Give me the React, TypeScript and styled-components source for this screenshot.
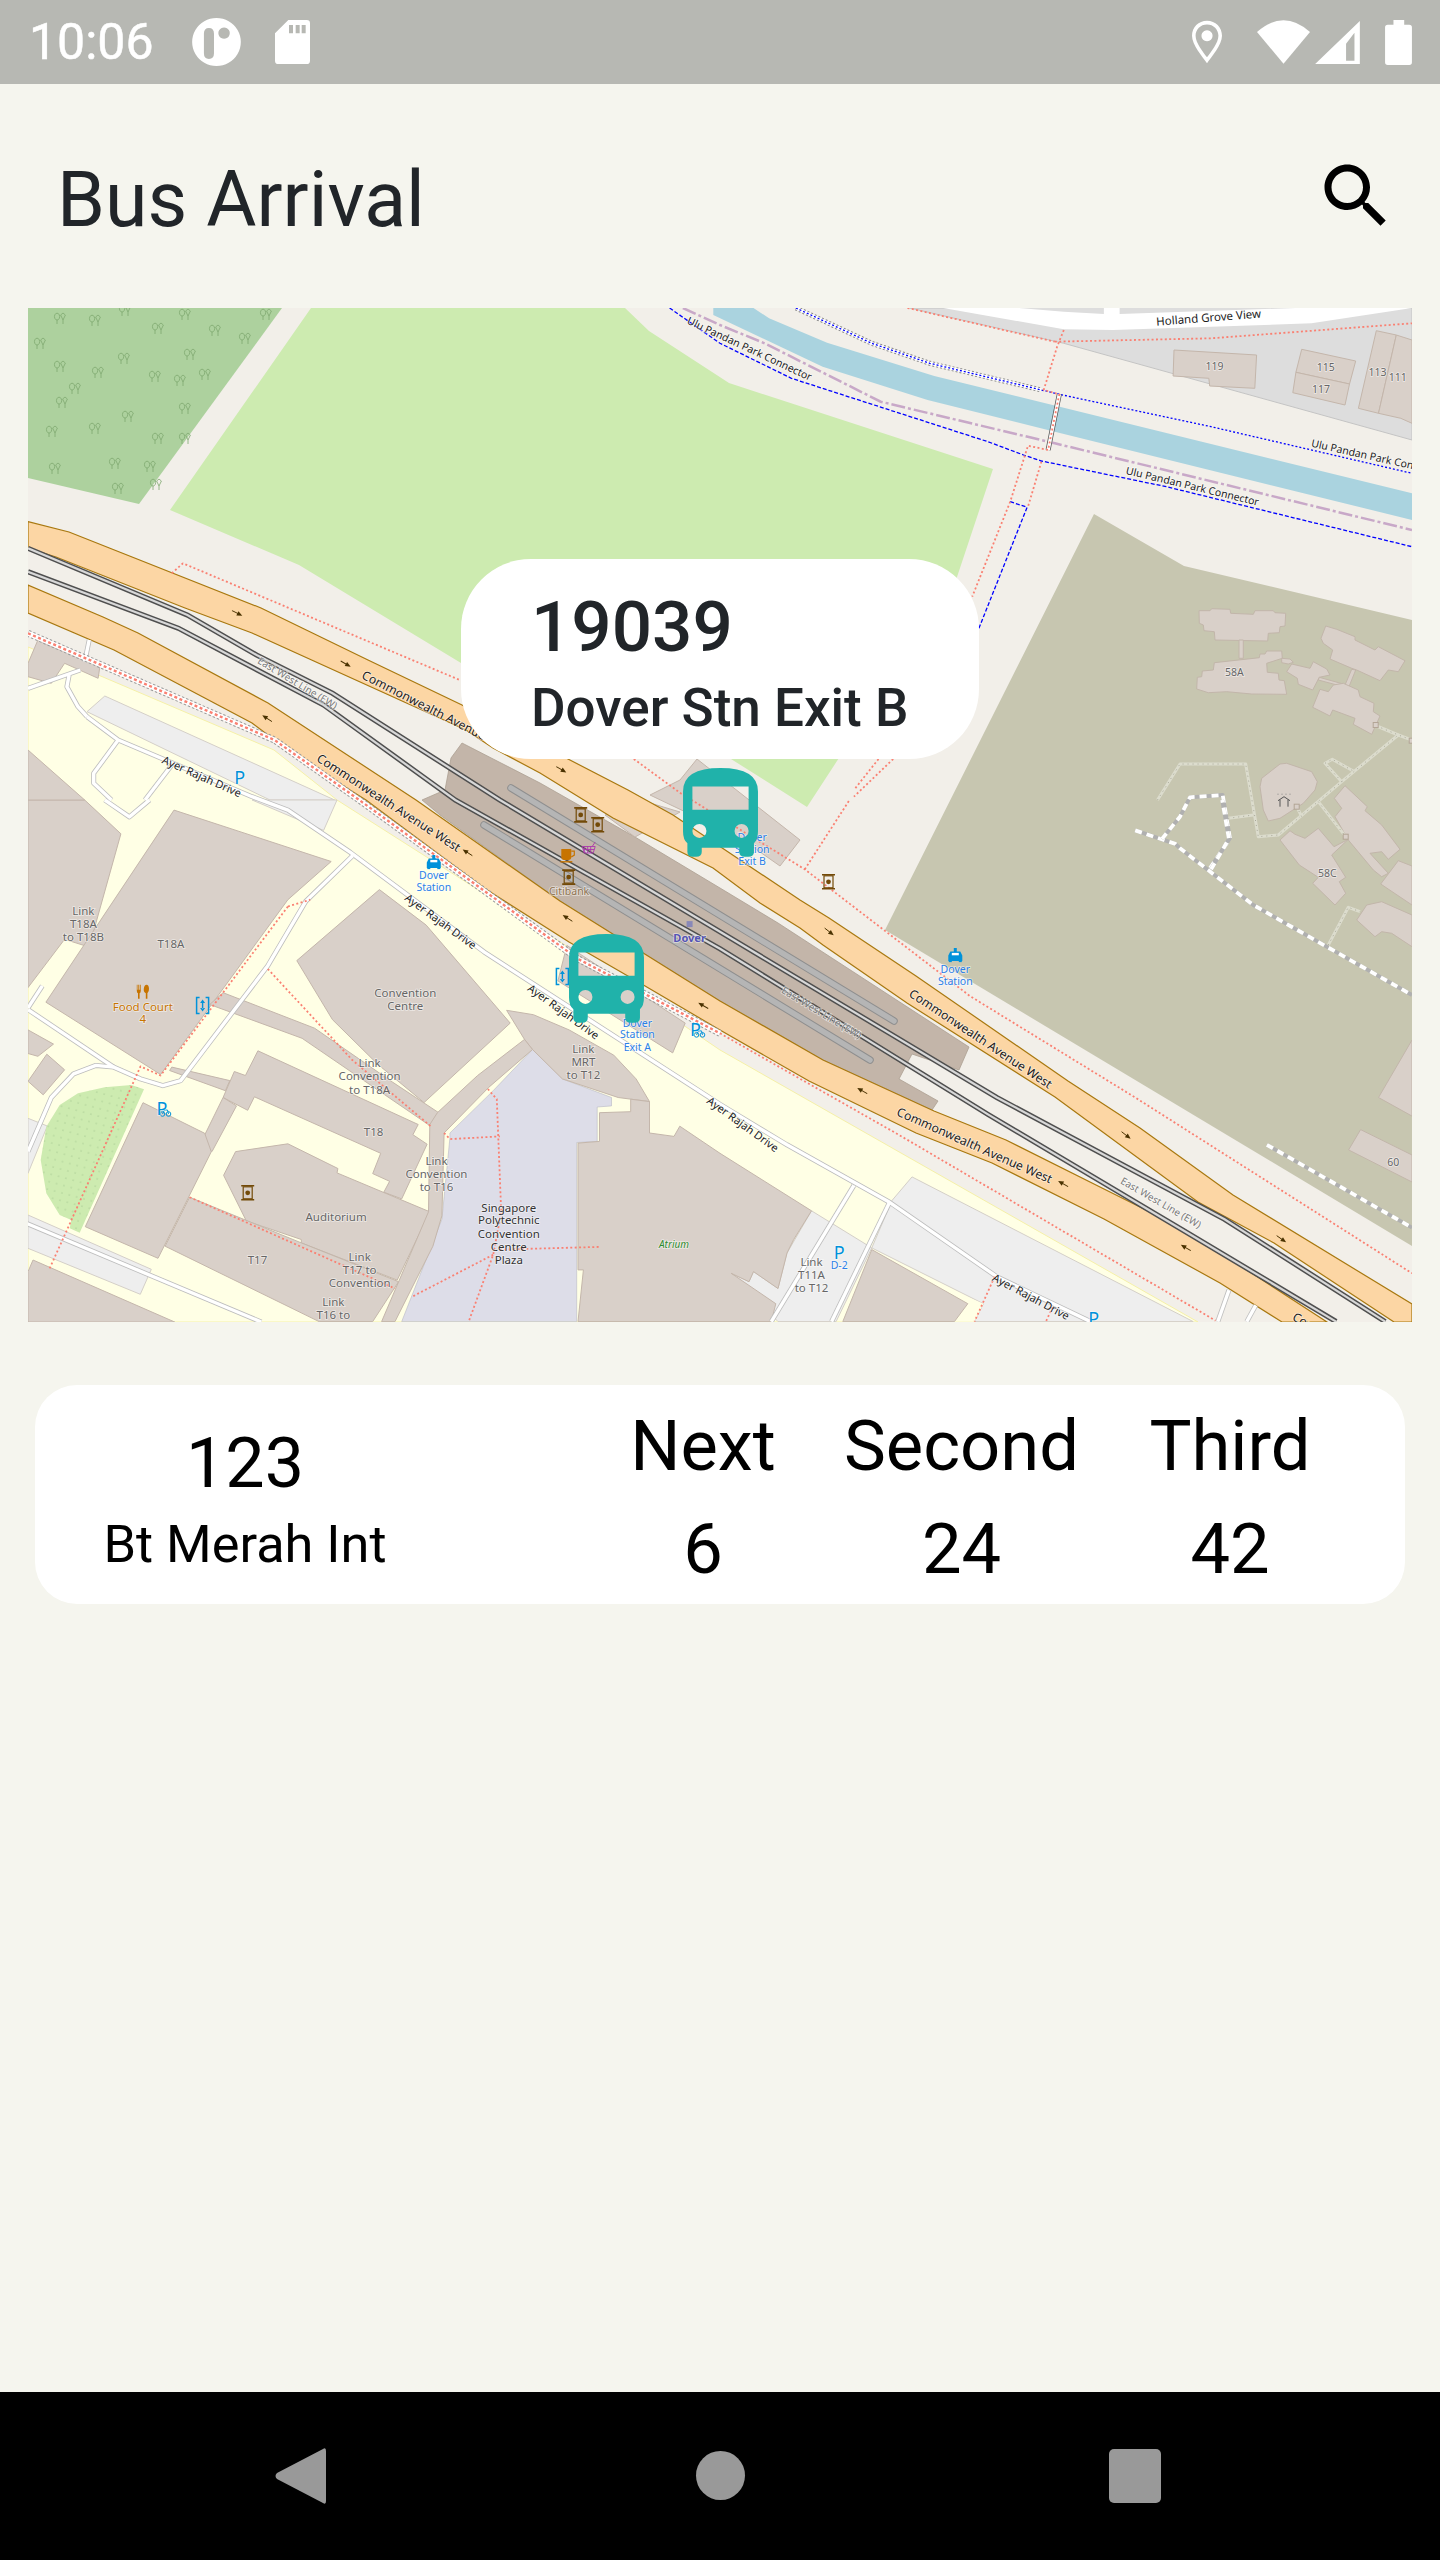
import React from 'react';
import styled, { createGlobalStyle } from 'styled-components';

const GlobalStyle = createGlobalStyle`
  html, body { margin: 0; padding: 0; background: #f5f5ee; }
  * { box-sizing: border-box; }
`;

const Page = styled.div`
  width: 1440px;
  height: 2560px;
  display: flex;
  flex-direction: column;
  background: #f5f5ee;
  font-family: Roboto, "Liberation Sans", sans-serif;
  overflow: hidden;
`;
const StatusBar = styled.div`
  height: 84px;
  flex: none;
  background: #b7b8b3;
  display: flex;
  align-items: center;
  padding: 0 28px 0 29px;
`;
const Clock = styled.div`
  color: #fff;
  font-size: 50px;
  line-height: 84px;
  width: 163px;
  -webkit-text-stroke: 0.5px #fff;
`;
const StatusGroup = styled.div<{ $gap: number }>`
  display: flex;
  align-items: center;
  gap: ${(p) => p.$gap}px;
`;
const StatusIcon = styled.svg<{ $after?: number; $before?: number }>`
  display: block;
  flex: none;
  margin-right: ${(p) => p.$after || 0}px;
  margin-left: ${(p) => p.$before || 0}px;
`;
const Grow = styled.div`
  flex: 1;
`;
const AppBar = styled.div`
  height: 224px;
  flex: none;
  display: flex;
  align-items: center;
  justify-content: space-between;
  padding: 0 42px 0 57px;
`;
const Title = styled.h1`
  margin: 0;
  padding-top: 8px;
  font-size: 77px;
  font-weight: 400;
  line-height: 90px;
  color: #212529;
`;
const SearchIcon = styled.svg`
  display: block;
  width: 84px;
  height: 84px;
`;
const MapPanel = styled.div`
  position: relative;
  flex: none;
  width: 1384px;
  height: 1014px;
  margin: 0 28px;
  overflow: hidden;
`;
const MapSvg = styled.svg`
  display: block;
  width: 1384px;
  height: 1014px;
`;
const Bubble = styled.div`
  position: absolute;
  left: 433px;
  top: 251px;
  width: 518px;
  height: 200px;
  border-radius: 70px;
  background: #fff;
  padding: 30px 0 0 70px;
  color: #212529;
  font-weight: 500;
`;
const StopCode = styled.div`
  font-size: 71px;
  line-height: 76px;
`;
const StopName = styled.div`
  margin-top: 13px;
  font-size: 53px;
  line-height: 60px;
  white-space: nowrap;
`;
const BusMarker = styled.svg<{ $left: number; $top: number }>`
  position: absolute;
  left: ${(p) => p.$left}px;
  top: ${(p) => p.$top}px;
  width: 75px;
  height: 89px;
`;
const MapLabel = styled.text<{ $c: string; $s: number; $w?: number; $i?: boolean }>`
  font-family: "Noto Sans", "Open Sans", sans-serif;
  font-size: ${(p) => p.$s}px;
  font-weight: ${(p) => p.$w || 400};
  font-style: ${(p) => (p.$i ? 'italic' : 'normal')};
  fill: ${(p) => p.$c};
  stroke: rgba(255, 255, 255, 0.55);
  stroke-width: 1.6px;
  paint-order: stroke;
  dominant-baseline: central;
`;
const ArrivalCard = styled.div`
  flex: none;
  height: 219px;
  margin: 63px 35px 0;
  border-radius: 42px;
  background: #fff;
  color: #000;
  display: grid;
  grid-template-columns: 561px 214px 303px 234px;
  padding-top: 10px;
`;
const RouteBlock = styled.div`
  padding: 28px 141px 0 0;
  text-align: center;
`;
const RouteNo = styled.div`
  font-size: 70px;
  line-height: 80px;
`;
const RouteDest = styled.div`
  margin-top: 6px;
  font-size: 52.3px;
  line-height: 70px;
  white-space: nowrap;
`;
const TimeColumn = styled.div`
  display: grid;
  grid-auto-rows: 103px;
  text-align: center;
  font-size: 70.5px;
  line-height: 103px;
`;
const NavBar = styled.div`
  margin-top: auto;
  height: 168px;
  flex: none;
  background: #000;
  display: grid;
  grid-template-columns: 550px 340px 550px;
  align-items: center;
  padding-bottom: 1px;
`;
const NavCell = styled.div<{ $j: string; $pad: number }>`
  display: flex;
  justify-content: ${(p) => p.$j};
  padding: 0 ${(p) => p.$pad}px;
`;
const NavBack = styled.svg`
  display: block;
  width: 51px;
  height: 56px;
`;
const NavHome = styled.div`
  width: 49px;
  height: 49px;
  border-radius: 50%;
  background: #999;
`;
const NavRecent = styled.div`
  width: 52px;
  height: 54px;
  border-radius: 5px;
  background: #999;
`;

const z = (ox: number, oy: number, sy: number, sx = 2.24) => (s: string) =>
  s
    .trim()
    .split(/\s+/)
    .map((p) => {
      const [x, y] = p.split(',').map(Number);
      return `${(ox + x / sx).toFixed(1)},${(oy + y / sy).toFixed(1)}`;
    })
    .join(' ');
const z2 = z(20, 300, 3);
const z3 = z(720, 300, 3);
const z4 = z(20, 800, 2.958);
const z5 = z(720, 800, 2.958);
const zs = z(1180, 590, 3, 3);
const zl = z(28, 1080, 3, 3);
type Fn = typeof z2;
const pt = (f: Fn, x: number, y: number) => f(`${x},${y}`).split(',').map(Number);

const C = {
  land: '#f2efe9',
  school: '#ffffe5',
  park: '#cdebb0',
  forest: '#add19e',
  water: '#aad3df',
  sage: '#c7c6b0',
  bld: '#d9d0c9',
  bldLine: '#c4b6ab',
  station: '#c3b5a9',
  road: '#fcd6a4',
  roadLine: '#a8780f',
  park2: '#eeeeee',
  plaza: '#dddde8',
  grey: '#dddddd',
  salmon: '#fa8072',
  blue: '#0000ff',
};

const buildings = [
  z4('18,0 145,0 226,100 155,435 100,412 18,555'),
  z2('18,1350 145,1500 18,1500'),
  z4('345,30 697,182 600,295 315,812 58,598'),
  z4('805,265 910,370 1098,660 905,895 800,780 700,650 620,475'),
  z4('455,570 660,675 835,835 938,925 920,965 632,705 425,605'),
  z4('340,790 470,830 460,860 335,800'),
  z4('533,742 892,960 880,990 912,1018 855,1180 815,1160 828,1128 790,1105 808,1045 525,878 510,918 455,880 480,803 505,815'),
  z4('455,880 485,905 430,1040 402,1022'),
  zl('345,68 530,160 550,215 390,535 172,440'),
  z4('483,1040 600,1017 712,1090 710,1103 918,1218 845,1420 630,1310 630,1300 507,1245 456,1110'),
  z4('380,1175 630,1310 848,1425 790,1543 670,1543 325,1320'),
  zl('15,540 440,726 0,726 0,575'),
  z4('18,680 75,722 40,758 18,750'),
  z4('60,752 100,798 52,872 18,832'),
  z4('1090,622 1150,635 1230,680 1330,755 1380,825 1410,892 1340,880 1215,825 1148,738 1130,708'),
  z4('1130,708 1148,738 1050,850 950,985 945,1230 925,1320 840,1543 810,1543 915,1218 918,960 935,925 1025,815'),
  `${z4('1250,1015 1298,1010 1298,925 1368,922 1368,885 1410,892 1410,985 1465,995 1478,965')} ${z5('0,1045 205,1215 165,1300 150,1340 130,1445 75,1395 65,1425 25,1400 125,1490 115,1543')} ${z4('1250,1543 1262,1390 1250,1390')}`,
  z5('340,1330 555,1490 525,1543 275,1543'),
  z4('1205,535 1225,430 1490,660 1462,748'),
  z2('18,1090 40,1020 80,1045 180,1090 175,1135 100,1090 70,1150 18,1130'),
];

const sageBuildings = [
  zs('57,62 90,62 95,56 150,58 152,70 220,73 225,62 280,62 285,68 317,70 315,108 300,110 298,128 265,130 263,153 105,150 103,125 72,122 70,105 58,100'),
  zs('177,150 190,150 190,205 177,205'),
  zs('50,297 52,262 65,260 67,243 100,240 103,218 238,203 240,192 255,192 260,183 305,183 307,205 260,220 262,247 295,250 297,270 313,272 320,313 215,312 140,305 85,308'),
  zs('305,205 330,207 340,217 325,222 305,218'),
  zs('320,245 335,222 390,235 400,215 440,237 450,255 418,262 398,300 355,283 352,265'),
  zs('418,262 490,282 490,290 415,270'),
  zs('423,145 437,108 470,118 525,140 525,150 585,180 595,170 675,212 655,245 625,240 600,272 530,240 515,235 450,207 458,180 430,160'),
  zs('515,238 527,240 507,290 495,285'),
  zs('398,352 420,298 445,305 460,285 490,280 535,300 540,320 582,340 580,365 600,378 575,433 520,403 525,385 458,360 450,378'),
  zs('240,590 245,565 300,522 320,520 395,545 412,575 405,600 370,640 300,685 265,693 250,660'),
  zs('300,750 330,722 345,733 375,745 415,715 462,770 505,748 455,795 497,862 478,875 497,910 465,945 398,880 415,862 358,825'),
  zs('463,625 495,587 562,650 555,662 605,705 660,778 625,808 605,785 570,790 625,850 605,860 580,840 505,750 465,680 485,655'),
  zs('655,812 696,828 696,945 602,882'),
  zs('530,990 560,945 605,935 696,975 696,1070 635,1030 605,1025 585,1040'),
  z5('1435,975 1550,1050 1550,1130 1408,1035'),
  z5('1550,710 1475,880 1550,935'),
];

const yard = [
  z3('1017,150 1202,165 1198,265 1097,258 1095,235 1015,228'),
  z3('1303,148 1424,183 1410,252 1290,217'),
  z3('1290,217 1410,252 1400,315 1283,278'),
  z3('1470,92 1515,105 1475,340 1430,325'),
  z3('1515,105 1550,120 1550,370 1525,355 1475,340'),
];

const footways = [
  z3('420,24 750,125'),
  z3('750,125 1100,115 1550,70'),
  z3('770,90 755,140 725,270 760,283 735,450 690,437 650,605 565,890'),
  z3('720,485 690,620'),
  z3('355,1377 300,1470'),
  z3('388,1377 300,1490'),
  z2('340,820 365,790 985,1140'),
  `${z2('1375,1377 1480,1480')} ${z5('190,205 560,580 930,880 1550,1400')}`,
  z5('190,205 290,0'),
  z5('0,690 400,990 1110,1540'),
  z4('600,315 650,295'),
  z4('600,315 315,815 270,788 65,1390'),
  z4('555,500 745,770 920,965'),
  z4('380,1175 840,1445'),
  z4('1048,855 1068,885 1078,1220 1060,1345 1005,1543'),
  z4('950,985 963,1003 1075,995'),
  z4('1075,1330 1298,1322'),
  z4('1060,1345 880,1468'),
  z5('615,1410 570,1543'),
  z5('745,1500 730,1543'),
];

const casedFoot = `${z2('18,1000 570,1320 760,1500')} ${z4('1250,470 1568,690')}`;
const whiteRoads = [
  `${z2('150,1250 220,1320 520,1490')} ${z4('600,30 740,155 1040,450 1568,900')} ${z5('150,1020 380,1190 620,1410 830,1543')}`,
  z2('18,1165 135,1110'),
  z2('110,1125 105,1160 130,1220 150,1250'),
  z2('155,1020 145,1085'),
  z2('220,1320 165,1420 165,1450 205,1500'),
  z2('340,1395 280,1500'),
  z4('190,0 245,50 290,0'),
  z4('745,165 640,300 555,490 360,830 320,845 270,825 210,790 170,785 120,810 70,880 18,1040'),
  z4('18,620 210,790'),
  z4('18,615 50,550'),
  zl('-5,430 700,726'),
  z5('300,1140 115,1543'),
  z5('380,1190 250,1543'),
  z5('1140,1450 1115,1543'),
  z5('1200,1495 1180,1543'),
];

const heavyTrails = [
  `${z5('930,90 1020,130')} ${zs('0,775 220,945 440,1070 696,1215')}`,
  z5('1225,1020 1550,1265'),
  `${z5('990,115')} ${zs('0,680 30,622 128,615 150,745 90,835')}`,
  z5('1100,205 1140,115 1125,0'),
];
const lightTrails = [
  `${z3('980,1500')} ${zs('0,522 197,522 235,740 295,735 485,575 655,435 696,450')}`,
  zs('590,408 655,435'),
  zs('485,575 435,520 457,508 520,543'),
  zs('415,635 497,740'),
  zs('145,685 220,675'),
  zs('350,650 365,680'),
  zs('445,1065 505,952 540,965'),
];
const posts: [number, number][] = [[587, 405], [350, 650], [497, 740], [695, 452]];

type L = { f: Fn; x: number; y: number; t: string; c?: string; s?: number; r?: number; a?: 'start' | 'middle' | 'end'; w?: number; i?: boolean };
const G = '#666666';
const R = '#1c1c1c';
const B = '#2b7fe8';
const labels: L[] = [
  { f: z4, x: 142, y: 326, t: 'Link' }, { f: z4, x: 142, y: 365, t: 'T18A' }, { f: z4, x: 142, y: 403, t: 'to T18B' },
  { f: z4, x: 338, y: 423, t: 'T18A' },
  { f: z4, x: 275, y: 611, t: 'Food Court', c: '#c77400' }, { f: z4, x: 275, y: 647, t: '4', c: '#c77400' },
  { f: z4, x: 863, y: 570, t: 'Convention' }, { f: z4, x: 863, y: 609, t: 'Centre' },
  { f: z4, x: 783, y: 777, t: 'Link' }, { f: z4, x: 783, y: 816, t: 'Convention' }, { f: z4, x: 783, y: 855, t: 'to T18A' },
  { f: z4, x: 792, y: 979, t: 'T18' },
  { f: z4, x: 933, y: 1066, t: 'Link' }, { f: z4, x: 933, y: 1105, t: 'Convention' }, { f: z4, x: 933, y: 1143, t: 'to T16' },
  { f: z4, x: 1095, y: 1204, t: 'Singapore', c: '#333' }, { f: z4, x: 1095, y: 1242, t: 'Polytechnic', c: '#333' },
  { f: z4, x: 1095, y: 1281, t: 'Convention', c: '#333' }, { f: z4, x: 1095, y: 1320, t: 'Centre', c: '#333' }, { f: z4, x: 1095, y: 1358, t: 'Plaza', c: '#333' },
  { f: z4, x: 708, y: 1232, t: 'Auditorium' }, { f: z4, x: 532, y: 1358, t: 'T17' },
  { f: z4, x: 761, y: 1349, t: 'Link' }, { f: z4, x: 761, y: 1388, t: 'T17 to' }, { f: z4, x: 761, y: 1427, t: 'Convention' },
  { f: z4, x: 702, y: 1482, t: 'Link' }, { f: z4, x: 702, y: 1521, t: 'T16 to' },
  { f: z4, x: 1262, y: 734, t: 'Link' }, { f: z4, x: 1262, y: 772, t: 'MRT' }, { f: z4, x: 1262, y: 811, t: 'to T12' },
  { f: z4, x: 1465, y: 1312, t: 'Atrium', c: '#2e8b2e', s: 10, i: true },
  { f: z4, x: 927, y: 223, t: 'Dover', c: B, s: 10.5 }, { f: z4, x: 927, y: 258, t: 'Station', c: B, s: 10.5 },
  { f: z4, x: 1383, y: 659, t: 'Dover', c: B, s: 10.5 }, { f: z4, x: 1383, y: 693, t: 'Station', c: B, s: 10.5 }, { f: z4, x: 1383, y: 729, t: 'Exit A', c: B, s: 10.5 },
  { f: z5, x: 527, y: 500, t: 'Dover', c: B, s: 10.5 }, { f: z5, x: 527, y: 535, t: 'Station', c: B, s: 10.5 },
  { f: z5, x: 72, y: 110, t: 'Dover', c: B, s: 10.5 }, { f: z5, x: 72, y: 145, t: 'Station', c: B, s: 10.5 }, { f: z5, x: 72, y: 180, t: 'Exit B', c: B, s: 10.5 },
  { f: z4, x: 1230, y: 268, t: 'Citibank', c: '#8f7350', s: 10.5 },
  { f: z4, x: 1500, y: 408, t: 'Dover', c: '#5555b5', s: 11, w: 700 },
  { f: z5, x: 205, y: 1365, t: 'Link' }, { f: z5, x: 205, y: 1403, t: 'T11A' }, { f: z5, x: 205, y: 1442, t: 'to T12' },
  { f: z3, x: 1108, y: 197, t: '119', s: 10.5 }, { f: z3, x: 1357, y: 202, t: '115', s: 10.5 }, { f: z3, x: 1346, y: 266, t: '117', s: 10.5 },
  { f: z3, x: 1473, y: 217, t: '113', s: 10.5 }, { f: z3, x: 1518, y: 231, t: '111', s: 10.5 },
  { f: zs, x: 163, y: 245, t: '58A', s: 10.5 },
  { f: zs, x: 442, y: 850, t: '58C', s: 10.5 }, { f: z5, x: 1508, y: 1072, t: '60', s: 10.5 },
  { f: z2, x: 408, y: 1428, t: 'Ayer Rajah Drive', c: R, s: 11, r: 24 },
  { f: z4, x: 943, y: 358, t: 'Ayer Rajah Drive', c: R, s: 11, r: 36 },
  { f: z4, x: 1218, y: 625, t: 'Ayer Rajah Drive', c: R, s: 11, r: 36 },
  { f: z5, x: 52, y: 958, t: 'Ayer Rajah Drive', c: R, s: 11, r: 36 },
  { f: z5, x: 697, y: 1468, t: 'Ayer Rajah Drive', c: R, s: 11, r: 28 },
  { f: z2, x: 768, y: 1122, t: 'Commonwealth Avenue West', c: R, s: 12.2, r: 27, a: 'start' },
  { f: z2, x: 668, y: 1370, t: 'Commonwealth Avenue West', c: R, s: 12.2, r: 33, a: 'start' },
  { f: z5, x: 427, y: 568, t: 'Commonwealth Avenue West', c: R, s: 12.2, r: 33.6, a: 'start' },
  { f: z5, x: 398, y: 920, t: 'Commonwealth Avenue West', c: R, s: 12.2, r: 24, a: 'start' },
  { f: z5, x: 1285, y: 1525, t: 'Commonwealth', c: R, s: 12.2, r: 30, a: 'start' },
  { f: z3, x: 910, y: 510, t: 'Ulu Pandan Park Connector', c: R, s: 10.5, r: 13.5, a: 'start' },
  { f: z3, x: 1325, y: 428, t: 'Ulu Pandan Park Connector', c: R, s: 10.5, r: 12.5, a: 'start' },
  { f: z3, x: 205, y: 232, t: 'Ulu Pandan Park Connector', c: R, s: 10.5, r: 25, a: 'end' },
  { f: z3, x: 977, y: 64, t: 'Holland Grove View', c: R, s: 11.5, r: -4.5, a: 'start' },
  { f: z2, x: 622, y: 1148, t: 'East West Line (EW)', c: '#7a7a7a', s: 10, r: 31 },
  { f: z5, x: 228, y: 628, t: 'East West Line (EW)', c: '#7a7a7a', s: 10, r: 31 },
  { f: z5, x: 988, y: 1190, t: 'East West Line (EW)', c: '#7a7a7a', s: 10, r: 30 },
  { f: z5, x: 267, y: 1376, t: 'D-2', c: B, s: 10.5 },
];
const pLabels: [Fn, number, number][] = [
  [z2, 492, 1430], [z5, 267, 1337], [z5, 837, 1532], [z4, 318, 910], [z4, 1513, 676],
];
const arrows: [Fn, number, number, number][] = [
  [z2, 487, 940, 27], [z2, 730, 1092, 30], [z2, 1213, 1409, 30], [z2, 553, 1255, 213], [z4, 1002, 155, 213], [z4, 1226, 349, 213], [z4, 1530, 608, 210],
  [z5, 245, 390, 38], [z5, 910, 992, 38], [z5, 1258, 1299, 35], [z5, 318, 860, 210], [z5, 768, 1135, 210], [z5, 1043, 1324, 210],
];
const atms: [Fn, number, number][] = [
  [z4, 1256, 44], [z4, 1294, 73], [z4, 1229, 228], [z4, 510, 1162], [z5, 243, 242],
];
const taxis: [Fn, number, number][] = [[z4, 927, 182], [z5, 527, 457]];
const elevators: [Fn, number, number][] = [[z4, 409, 608], [z4, 1215, 522]];
const bikes: [Fn, number, number][] = [[z4, 326, 926], [z4, 1522, 692]];
const trees: [number, number][] = [[60,320],[95,322],[125,312],[185,316],[215,332],[158,330],[266,316],[245,340],[190,356],[124,360],[98,374],[60,368],[155,378],[180,382],[75,390],[40,345],[62,404],[205,376],[185,410],[128,418],[95,430],[52,433],[115,465],[158,440],[150,468],[55,470],[185,440],[118,490],[156,486]];

const at = (f: Fn, x: number, y: number) => {
  const [a, b] = pt(f, x, y);
  return `translate(${a} ${b})`;
};

const BusShape = () => (
  <path
    fillRule="evenodd"
    fill="#20b2aa"
    d="M0,70 Q0,0 112,0 Q224,0 224,70 V190 Q224,215 212,225 V250 Q212,265 195,265 H185 Q168,265 168,250 V238 H56 V250 Q56,265 39,265 H29 Q13,265 13,250 V225 Q0,215 0,190 Z M28,55 V125 H196 V55 Z M70,188 A21,21 0 1 0 28,188 A21,21 0 1 0 70,188 Z M196,188 A21,21 0 1 0 154,188 A21,21 0 1 0 196,188 Z"
  />
);

const MapDrawing = () => (
  <MapSvg viewBox="28 308 1384 1014">
    <defs>
      <pattern id="lawnDots" width="7.6" height="7.6" patternUnits="userSpaceOnUse" patternTransform="rotate(15)">
        <rect width="7.6" height="7.6" fill={C.park} />
        <circle cx="3.8" cy="3.8" r="0.55" fill="#8fb57f" />
      </pattern>
    </defs>
    <rect x="28" y="308" width="1384" height="1014" fill={C.land} />
    <polygon points="28,647 103,677 274,750 337,800 565,945 720,1050 1198,1322 28,1322" fill={C.school} stroke="#f5f0a8" strokeWidth="1" />
    <g fill={C.park2} stroke="#d4cfc8" strokeWidth="1">
      <polygon points={z2('190,1188 705,1500 560,1500 150,1235')} />
      <polygon points={z4('555,0 710,0 680,90 520,0')} />
      <polygon points={zl('0,405 370,568 337,643 0,505')} />
      <polygon points={zl('0,115 58,138 0,280')} />
      <polygon points={z5('430,1115 1060,1543 570,1543 590,1490 340,1325 385,1185')} />
      <polygon points={z5('205,1215 340,1325 260,1543 130,1543 25,1400 65,1425 75,1395 130,1445 150,1340')} />
    </g>
    <polygon points={z5('545,1465 590,1490 570,1543 525,1543')} fill={C.school} />
    <polygon points={z4('1475,1515 1530,1515 1518,1543 1470,1543')} fill={C.park2} />
    <polygon points={z4('1148,738 1215,825 1325,880 1325,905 1293,908 1293,1010 1247,1013 1247,1543 855,1543 945,1240 963,1000 963,985 1060,860')} fill={C.plaza} stroke="#b8b8c4" strokeWidth="0.6" />
    <g fill={C.bld} stroke={C.bldLine} strokeWidth="1">
      {buildings.map((p, i) => <polygon key={i} points={p} />)}
    </g>
    <polygon points={zl('230,22 310,15 348,28 155,458 125,445 130,420 95,405 55,340 38,240 55,140 95,75 150,40')} fill="url(#lawnDots)" />
    <polygon points="28,308 282,308 139,504 28,478" fill={C.forest} />
    <g fill="none" stroke="#7fa870" strokeWidth="0.8">
      {trees.map(([x, y]) => (
        <g key={`${x}-${y}`} transform={`translate(${x} ${y})`}>
          <path d="M-3,0 a2.6,3.4 0 1 1 0.1,0 Z M-3,0 v4 M3,0 l-2.4,-5 l2.4,-2 l2.4,2 Z M3,0 v4" />
        </g>
      ))}
    </g>
    <polygon points="311,308 170,510 299,565 461,663 731,759 807,807 957,577 993,469 729,383 649,331 625,308" fill={C.park} />
    <polygon points={z3('-15,24 75,24 110,55 240,128 480,228 1550,580 1550,660 750,395 465,300 230,200 -15,45')} fill={C.water} />
    <polygon points="1094,514 1184,566 1412,620 1412,1246 885,930" fill={C.sage} />
    <g fill={C.bld} stroke="#c2b6aa" strokeWidth="1">
      {sageBuildings.map((p, i) => <polygon key={i} points={p} />)}
    </g>
    <polygon points={z3('425,24 770,130 1550,420 1550,24')} fill={C.grey} stroke="#c4c4c4" strokeWidth="1" />
    <polygon points={z3('500,24 770,88 880,90 1325,70 1550,24')} fill="#fff" />
    <polygon points={z3('670,24 860,24 860,42 770,35')} fill={C.grey} />
    <polygon points={z3('895,24 1290,24 895,42')} fill={C.grey} />
    <g fill={C.bld} stroke={C.bldLine} strokeWidth="1">
      {yard.map((p, i) => <polygon key={i} points={p} />)}
    </g>
    <g fill="none" strokeLinecap="butt">
      <polyline points={`${z2('1485,24')} ${z3('0,75 100,130 360,305 750,430 1550,690')}`} stroke="#c8a8c8" strokeWidth="2.5" strokeDasharray="14 3 3 3" />
      <polyline points={z3('170,24 340,130 470,190 720,270')} stroke="#888" strokeWidth="5" strokeDasharray="2 2" />
      <polyline points={z3('170,24 340,130 470,190 720,270')} stroke="#fff" strokeWidth="3" />
      <polyline points={z3('170,24 340,130 470,190 720,270 760,283 1100,380 1550,520')} stroke={C.blue} strokeWidth="1.3" strokeDasharray="2 2" />
      <polyline points={`${z2('1455,24')} ${z3('0,130 160,235 600,425 680,465 720,483 1000,560 1550,740')}`} stroke={C.blue} strokeWidth="1.3" strokeDasharray="4 2" />
      <polyline points={z3('650,605 688,622 580,985')} stroke={C.blue} strokeWidth="1.3" strokeDasharray="4 2" />
      <polyline points={z3('760,283 735,450')} stroke="#555" strokeWidth="5" />
      <polyline points={z3('760,283 735,450')} stroke="#fff" strokeWidth="3.5" />
    </g>
    <polygon points="462,743 540,783 635,837 720,888 778,923 969,1047 959,1070 912,1054 899,1079 938,1101 932,1110 823,1060 720,1001 560,901 440,815 422,800 445,790 451,758" fill={C.station} stroke="#ac9f92" strokeWidth="0.8" />
    <g fill={C.bld} stroke={C.bldLine} strokeWidth="1">
      <polygon points="697,759 800,840 780,866 740,838 650,795 680,780" />
      <polygon points="605,815 635,837 680,812 640,800" />
    </g>
    <polygon points="28,521.7 69,532 261,608 368,660 462,705 568,759 628,790 673,815 800,900 829,918 916,976 1068,1081 1140,1128 1233,1195 1412,1304 1412,1322 1394,1322 1274,1243 1198,1202 1055,1097 907,1003 823,945 800,928 760,903 713,868 613,818 540,773 493,748 466,730 252,633 185,608 56,557 28,548" fill={C.road} stroke={C.roadLine} strokeWidth="1.2" />
    <polygon points="28,585 103,617 138,633 268,703 416,800 560,901 720,1001 823,1060 934,1111 1006,1140 1104,1189 1184,1229 1327,1322 1282,1322 1220,1283 1104,1219 992,1163 916,1133 809,1081 720,1030 640,983 569,942 484,888 366,800 297,757 252,723 114,650 28,613" fill={C.road} stroke={C.roadLine} strokeWidth="1.2" />
    <g fill="none" strokeLinecap="round">
      <polyline points="511,788 894,1021" stroke="#8f8f8f" strokeWidth="7.5" />
      <polyline points="511,788 894,1021" stroke="#b5b5b5" strokeWidth="5.5" />
      <polyline points="484,825 870,1060" stroke="#8f8f8f" strokeWidth="7.5" />
      <polyline points="484,825 870,1060" stroke="#b5b5b5" strokeWidth="5.5" />
    </g>
    <g fill="none">
      {[
        `${z2('18,745 375,945 530,1065 700,1180 1075,1500')} ${z5('0,390 620,880 1130,1240 1490,1543')}`,
        `${z2('18,815 355,985 680,1215 975,1500')} ${z5('0,440 600,930 1040,1275 1380,1543')}`,
      ].map((p) => (
        <g key={p}>
          <polyline points={p} stroke="#4f4f4f" strokeWidth="5.2" />
          <polyline points={p} stroke="#d8d8d8" strokeWidth="2.2" />
        </g>
      ))}
    </g>
    <g fill="none" strokeLinejoin="round">
      {whiteRoads.map((p) => <polyline key={p} points={p} stroke="#bdbdbd" strokeWidth="5" />)}
      {whiteRoads.map((p) => <polyline key={p} points={p} stroke="#fff" strokeWidth="3.4" />)}
      <polyline points={casedFoot} stroke="#999" strokeWidth="7" strokeDasharray="2.5 2" />
      <polyline points={casedFoot} stroke="#fff" strokeWidth="5" />
      <polyline points={casedFoot} stroke={C.salmon} strokeWidth="2.4" strokeDasharray="3 2.5" />
      {footways.map((p) => <polyline key={p} points={p} stroke={C.salmon} strokeWidth="1.8" strokeDasharray="2 2.4" />)}
    </g>
    <g fill="none" strokeLinejoin="round">
      {heavyTrails.map((p) => (
        <g key={p}>
          <polyline points={p} stroke="#b0b0b0" strokeWidth="3.8" />
          <polyline points={p} stroke="#fff" strokeWidth="3.8" strokeDasharray="7 5" />
        </g>
      ))}
      {lightTrails.map((p) => (
        <g key={p}>
          <polyline points={p} stroke="#dcdccd" strokeWidth="3" />
          <polyline points={p} stroke="#a9a99a" strokeWidth="1" strokeDasharray="1 4" />
        </g>
      ))}
    </g>
    <g fill={C.bld} stroke="#b3a596" strokeWidth="1">
      {posts.map(([x, y]) => {
        const [a, b] = pt(zs, x, y);
        return <rect key={x} x={a - 2.5} y={b - 2.5} width="5" height="5" />;
      })}
    </g>
    <g transform={at(zs, 312, 632)} fill="none" stroke="#555" strokeWidth="1">
      <path d="M-6,0 L0,-4 L6,0 M-4,-1 V6 M4,-1 V6" />
      <path d="M-6,-7 V-5 M-2,-7 V-5 M2,-7 V-5 M6,-7 V-5" stroke="#888" strokeDasharray="1 1" />
    </g>
    {arrows.map(([f, x, y, r]) => (
      <g key={`${x}-${y}`} transform={`${at(f, x, y)} rotate(${r})`}>
        <path d="M-6,0 H2" stroke="#4a3200" strokeWidth="0.9" />
        <path d="M0,-2.4 L5.5,0 L0,2.4 Z" fill="#4a3200" />
      </g>
    ))}
    {atms.map(([f, x, y]) => (
      <g key={`${x}-${y}`} transform={at(f, x, y)} stroke="#734a08" fill="none">
        <path d="M-6.5,-7 H6.5 M-6.5,7 H6.5" strokeWidth="1.6" />
        <rect x="-4.5" y="-6" width="9" height="12" strokeWidth="1.2" />
        <circle r="2.4" fill="#734a08" stroke="none" />
      </g>
    ))}
    {taxis.map(([f, x, y]) => (
      <g key={`${x}-${y}`} transform={at(f, x, y)} fill="#0092da">
        <path d="M-7,1 L-5,-3 H-1.5 V-6.5 H1.5 V-3 H5 L7,1 V6.5 H-7 Z" />
        <rect x="-6.5" y="6" width="3" height="1.6" />
        <rect x="3.5" y="6" width="3" height="1.6" />
        <rect x="-3.5" y="-1.6" width="7" height="2.4" fill="#fff" />
      </g>
    ))}
    {elevators.map(([f, x, y]) => (
      <g key={`${x}-${y}`} transform={at(f, x, y)}>
        <path d="M-3,-8 H-6 V8 H-3 M3,-8 H6 V8 H3" fill="none" stroke="#0092da" strokeWidth="1.5" />
        <path d="M0,-6 L2.5,-2.5 H-2.5 Z M0,6 L2.5,2.5 H-2.5 Z M-0.7,-3 H0.7 V3 H-0.7 Z" fill="#0092da" />
      </g>
    ))}
    {bikes.map(([f, x, y]) => (
      <g key={`${x}-${y}`} transform={at(f, x, y)} fill="none" stroke="#0092da" strokeWidth="1">
        <circle cx="-3" cy="1" r="2.3" />
        <circle cx="3" cy="1" r="2.3" />
        <path d="M-3,1 L-1,-3 H2 L3,1" />
      </g>
    ))}
    {pLabels.map(([f, x, y]) => {
      const [a, b] = pt(f, x, y);
      return <MapLabel key={`${x}-${y}`} x={a} y={b} textAnchor="middle" $c="#0092da" $s={18}>P</MapLabel>;
    })}
    <g transform={at(z4, 275, 567)} fill="#c77400">
      <path d="M-6,-7 V-1 Q-6,1 -4.8,1.5 V7 H-3.2 V1.5 Q-2,1 -2,-1 V-7 H-2.7 V-2 H-3.5 V-7 H-4.5 V-2 H-5.3 V-7 Z" />
      <path d="M3,7 V1.5 Q0.5,0 1,-3 Q1.5,-7 3.8,-7 Q6,-7 6.2,-3 Q6.4,0 4.6,1.5 V7 Z" />
    </g>
    <g transform={at(z4, 1226, 163)} fill="#c77400">
      <path d="M-6,-6 H4 V2 Q4,5 1,5 H-3 Q-6,5 -6,2 Z" />
      <path d="M4,-4 H7 V0 L4,2" fill="none" stroke="#c77400" strokeWidth="1.2" />
      <rect x="-7" y="6" width="12" height="1.4" />
    </g>
    <g transform={at(z4, 1275, 142)} stroke="#ac39ac" fill="none" strokeWidth="0.9">
      <path d="M-7,-1.5 H6 L4,5 H-5 Z M-4.5,-1.5 V5 M-1.5,-1.5 V5 M1.5,-1.5 V5 M-6,1.5 H5 M3,-1.5 L6,-6" />
    </g>
    <rect x={pt(z4, 1500, 367)[0] - 3} y={pt(z4, 1500, 367)[1] - 3} width="6" height="6" fill="#8888b8" />
    {labels.map((l, i) => {
      const [a, b] = pt(l.f, l.x, l.y);
      return (
        <MapLabel
          key={i}
          x={a}
          y={b}
          textAnchor={l.a || 'middle'}
          transform={l.r ? `rotate(${l.r} ${a} ${b})` : undefined}
          $c={l.c || G}
          $s={l.s || 11.5}
          $w={l.w}
          $i={l.i}
        >
          {l.t}
        </MapLabel>
      );
    })}
  </MapSvg>
);

export default function App() {
  return (
    <Page>
      <GlobalStyle />
      <StatusBar>
        <Clock>10:06</Clock>
        <StatusGroup $gap={34}>
          <StatusIcon width="49" height="48" viewBox="0 0 145 143">
            <path
              fill="#fff"
              fillRule="evenodd"
              d="M72.5,0 A72.5,71.5 0 1 1 72.4,0 Z M50,30 Q35,30 35,47 V105 Q35,122 50,122 Q65,122 65,105 V47 Q65,30 50,30 Z M95,28 A17,17 0 1 0 95.1,28 Z"
            />
          </StatusIcon>
          <StatusIcon width="35" height="44" viewBox="0 0 105 132">
            <path
              fill="#fff"
              fillRule="evenodd"
              d="M40,0 H95 Q105,0 105,10 V122 Q105,132 95,132 H10 Q0,132 0,122 V40 Z M42,15 V40 H54 V15 Z M62,15 V40 H74 V15 Z M80,15 V40 H92 V15 Z"
            />
          </StatusIcon>
        </StatusGroup>
        <Grow />
        <StatusGroup $gap={5}>
          <StatusIcon width="30" height="44" viewBox="0 0 92 130" $after={30}>
            <path
              fill="#fff"
              fillRule="evenodd"
              d="M46,0 C72,0 92,20 92,46 C92,75 60,110 46,130 C32,110 0,75 0,46 C0,20 20,0 46,0 Z M46,11 C26,11 11,26 11,46 C11,68 34,96 46,112 C58,96 81,68 81,46 C81,26 66,11 46,11 Z M46,29 A17,17 0 1 0 46.1,29 Z"
            />
          </StatusIcon>
          <StatusIcon width="53" height="44" viewBox="0 0 158 130">
            <path fill="#fff" d="M0,35 Q79,-35 158,35 L79,130 Z" />
          </StatusIcon>
          <StatusIcon width="45" height="43" viewBox="0 0 133 128">
            <path fill="#fff" fillRule="evenodd" d="M0,128 L133,0 V128 Z M92,118 H117 V35 L92,68 Z" />
          </StatusIcon>
          <StatusIcon width="27" height="45" viewBox="0 0 80 134" $before={20}>
            <path fill="#fff" d="M25,0 H57 V14 H72 Q80,14 80,22 V126 Q80,134 72,134 H8 Q0,134 0,126 V22 Q0,14 8,14 H25 Z" />
          </StatusIcon>
        </StatusGroup>
      </StatusBar>
      <AppBar>
        <Title>Bus Arrival</Title>
        <SearchIcon viewBox="0 0 24 24">
          <path
            fill="#000"
            d="M15.5 14h-.79l-.28-.27C15.41 12.59 16 11.11 16 9.5 16 5.91 13.09 3 9.5 3S3 5.91 3 9.5 5.91 16 9.5 16c1.61 0 3.09-.59 4.23-1.57l.27.28v.79l5 4.99L20.49 19l-4.99-5zm-6 0C7.01 14 5 11.99 5 9.5S7.01 5 9.5 5 14 7.01 14 9.5 11.99 14 9.5 14z"
          />
        </SearchIcon>
      </AppBar>
      <MapPanel>
        <MapDrawing />
        <Bubble>
          <StopCode>19039</StopCode>
          <StopName>Dover Stn Exit B</StopName>
        </Bubble>
        <BusMarker $left={655} $top={460} viewBox="0 0 224 266"><BusShape /></BusMarker>
        <BusMarker $left={541} $top={626} viewBox="0 0 224 266"><BusShape /></BusMarker>
      </MapPanel>
      <ArrivalCard>
        <RouteBlock>
          <RouteNo>123</RouteNo>
          <RouteDest>Bt Merah Int</RouteDest>
        </RouteBlock>
        <TimeColumn><span>Next</span><span>6</span></TimeColumn>
        <TimeColumn><span>Second</span><span>24</span></TimeColumn>
        <TimeColumn><span>Third</span><span>42</span></TimeColumn>
      </ArrivalCard>
      <NavBar>
        <NavCell $j="flex-end" $pad={224}>
          <NavBack viewBox="0 0 51 56">
            <path fill="#999" d="M48,1 Q51,-1 51,3 V53 Q51,57 48,55 L2,31 Q-1,28 2,25 Z" />
          </NavBack>
        </NavCell>
        <NavCell $j="center" $pad={0}><NavHome /></NavCell>
        <NavCell $j="flex-start" $pad={219}><NavRecent /></NavCell>
      </NavBar>
    </Page>
  );
}
